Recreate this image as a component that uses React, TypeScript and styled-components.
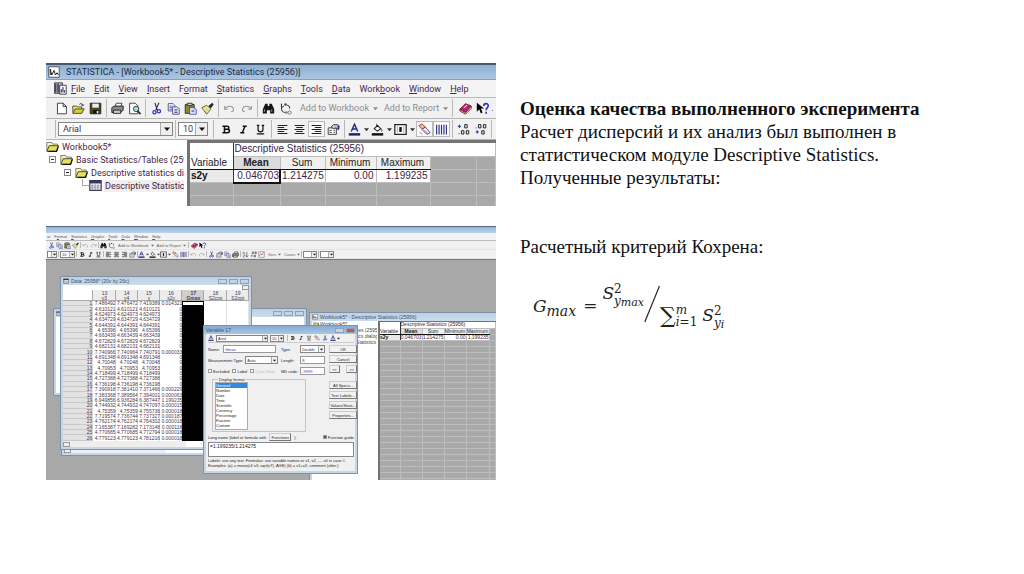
import React from "react";
import styled, { createGlobalStyle, css } from "styled-components";

const GlobalStyle = createGlobalStyle`
  *, *::before, *::after { box-sizing: border-box; }
  body { margin: 0; background: #fff; }
  button, select, input, textarea {
    margin: 0; padding: 0; border: 0; background: none; color: inherit; font: inherit; appearance: none; border-radius: 0; outline: none;
  }
  h1, p { margin: 0; }
  svg { flex: none; }
`;

/* ---------- slide ---------- */

const Slide = styled.main`
  display: grid;
  grid-template-columns: 450fr 504fr;
  column-gap: 24px;
  padding: 63px 0 0 46px;
`;

const Shots = styled.div`
  display: flex;
  flex-direction: column;
  gap: 20px;
  min-width: 0;
`;

const Notes = styled.section`
  padding-top: 34px;
  font: 19px/23px "Liberation Serif", serif;
  color: #111;
`;

const Heading = styled.h1`
  font-size: 19px;
  line-height: 23px;
  font-weight: 700;
  white-space: nowrap;
`;

const Body = styled.p`
  max-width: 400px;
  margin-bottom: 46px;
`;

/* ---------- formula ---------- */

const Formula = styled.div`
  display: flex;
  height: 46px;
  margin: 25px 0 0 13px;
  font: italic 17px/20px "DejaVu Serif", serif;
  color: #222;
`;

const Part = styled.div<{ $top?: number; $left?: number }>`
  display: flex;
  align-items: flex-start;
  padding-top: ${(p) => p.$top ?? 0}px;
  padding-left: ${(p) => p.$left ?? 0}px;
`;

const Sub = styled.span`
  font-size: 14px;
  line-height: 20px;
  padding-top: 5px;
`;

const Stack = styled.span`
  display: flex;
  flex-direction: column;
  font-size: 12px;
  line-height: 12px;
`;

const Upright = styled.span`
  font-style: normal;
`;

const Tiny = styled.span`
  padding-top: 2px;
  font-size: 11px;
  line-height: 12px;
`;

const Index = styled.span`
  display: flex;
  align-items: flex-start;
`;

const Slash = () => (
  <svg width="16" height="42" viewBox="0 0 16 42" aria-hidden="true">
    <path d="M15.5 3 L0.8 39" stroke="#222" strokeWidth="1.2" />
  </svg>
);

const Sigma = styled.span`
  font: normal 22px/24px "DejaVu Serif", serif;
`;

/* ---------- icons ---------- */

const art: Record<string, React.ReactNode> = {
  app: (
    <>
      <path d="M1 1h14v14H1z" fill="#fff" stroke="#333" />
      <path d="M3 12V4l2 8 3-6 2 6 2-3 2 3" fill="none" stroke="#222" strokeWidth="1.3" />
    </>
  ),
  book5: (
    <>
      <path d="M0.500 1h10v13h-10z" fill="#bbb" stroke="#333" />
      <path d="M2 2v11M5 2v11" stroke="#446" strokeWidth="2" />
      <path d="M7 4h8v11H7z" fill="#fff" stroke="#222" />
      <path d="M9 13V9M11 13V6M13 13v-3" stroke="#336" strokeWidth="1.4" />
    </>
  ),
  page: <path d="M3 1.5h7l4 4v9H3zM10 1.5v4h4" fill="#fff" stroke="#222" />,
  open: (
    <>
      <path d="M1 13V5h5l1 1h5v3" fill="#f3e95a" stroke="#333" />
      <path d="M1 14 4 8.500h11L12 14z" fill="#d8ce2c" stroke="#333" />
      <path d="M9 3c2-2 4-1 4 1m-1.500-1L13 5l1.500-2" fill="none" stroke="#222" />
    </>
  ),
  save: (
    <>
      <path d="M1.500 1.500h13v13h-13z" fill="#4a4a10" stroke="#111" />
      <path d="M4 2h8v5H4z" fill="#eee" />
      <path d="M5 10h7v4H5z" fill="#111" />
      <path d="M9.500 11h2v3h-2z" fill="#eee" />
    </>
  ),
  print: (
    <>
      <path d="M5 6 6.500 1.500h7L12 6z" fill="#fff" stroke="#222" />
      <path d="M1 7l3-2h11v5l-3 3H1z" fill="#8d8d8d" stroke="#111" />
      <path d="M3 10h9v4H3z" fill="#ccc" stroke="#111" />
      <path d="M9 12h2" stroke="#cc3" />
    </>
  ),
  preview: (
    <>
      <path d="M2 1.500h7l3 3v10H2z" fill="#fff" stroke="#222" />
      <circle cx="10" cy="8.500" r="3.300" fill="#a6dbe0" stroke="#222" />
      <path d="m12 11 3.500 4" stroke="#222" strokeWidth="2" />
    </>
  ),
  cut: (
    <>
      <path d="M6 1l3 9M11 1 7 10" stroke="#224" strokeWidth="1.300" />
      <circle cx="5.500" cy="12.500" r="2" fill="none" stroke="#2a35c0" strokeWidth="1.500" />
      <circle cx="11" cy="11.500" r="2" fill="none" stroke="#2a35c0" strokeWidth="1.500" />
    </>
  ),
  copy: (
    <>
      <path d="M1.500 2h6l2 2v7h-8z" fill="#fff" stroke="#333a8c" />
      <path d="M3 5h4M3 7h4M3 9h4" stroke="#444" />
      <path d="M7 6h5l3 2v7H7z" fill="#fff" stroke="#2a2f9c" />
      <path d="M9 9h4M9 11h4M9 13h4" stroke="#334" />
    </>
  ),
  paste: (
    <>
      <path d="M1.500 3h11v11h-11z" fill="#8a8a2c" stroke="#222" />
      <path d="M4 1.500h6v3H4z" fill="#ccc" stroke="#222" />
      <path d="M7 7h5l3 2v6H7z" fill="#fff" stroke="#2a2fb0" />
      <path d="M9 10h4M9 12h4" stroke="#2a2fb0" />
    </>
  ),
  brush: (
    <>
      <path d="m1 7 6-3 5 5-5 6z" fill="#f4ef8e" stroke="#443" />
      <path d="m3 9 4 4M5 7l4 4" stroke="#aa9" />
      <path d="m9 5 5-4 1.500 2L12 8z" fill="#223" />
    </>
  ),
  undo: <path d="M2 5v4h4M2 9c3-5 10-5 11 0 0 2-1 3-3 3" fill="none" stroke="#999" strokeWidth="1.300" />,
  redo: <path d="M14 5v4h-4m4 0C11 4 4 4 3 9c0 2 1 3 3 3" fill="none" stroke="#999" strokeWidth="1.300" />,
  find: (
    <>
      <path d="M4 2h3v3h2V2h3l3 7v5h-5v-4H6v4H1V9z" fill="#151515" />
      <path d="M3 9v3M12 9v3" stroke="#bbb" />
    </>
  ),
  replace: (
    <>
      <path d="M3 2v5l3-2M3 7c0 4 1 5 4 6m3-9c2 0 3 1 3 4" fill="none" stroke="#222" strokeWidth="1.200" />
      <circle cx="8" cy="3" r="1.500" fill="#444" />
      <circle cx="13" cy="13" r="2" fill="none" stroke="#666" />
      <circle cx="9" cy="13" r="1.500" fill="#777" />
    </>
  ),
  manual: (
    <>
      <path d="m1 9 7-7 7 3-7 8z" fill="#b0208c" stroke="#611" />
      <path d="m1 9 7 4 7-8v3l-7 7-7-4z" fill="#f1dca0" stroke="#702" />
      <path d="m6 7 4-3" stroke="#fbb" strokeWidth="1.500" />
    </>
  ),
  help: (
    <>
      <path d="M1 1v11l3-3 2 5 2-1-2-5h4z" fill="#000" />
      <path d="M9.500 5c0-4 6-4 5.500 0 0 2-2.500 2-2.500 5M12.500 12v2.500" fill="none" stroke="#2c34c4" strokeWidth="2" />
    </>
  ),
  bold: (
    <path d="M5.500 4v8M3 4h6c2.500 0 2.500 3.800 0 3.800H6M9 7.800c3.500 0 3.500 4.200 0 4.200H3" fill="none" stroke="#111" strokeWidth="1.900" />
  ),
  italic: <path d="M7 4h5M4 12h5M9.800 4 6.500 12" stroke="#111" strokeWidth="1.800" />,
  underline: <path d="M5 3v5c0 4 6 4 6 0V3M3.500 3h3M9.500 3h3M3.500 13.500h9" fill="none" stroke="#111" strokeWidth="1.500" />,
  left: <path d="M2 3h12M2 5.500h8M2 8h12M2 10.500h8M2 13h12" stroke="#222" strokeWidth="1.300" />,
  center: <path d="M2 3h12M4 5.500h8M2 8h12M4 10.500h8M2 13h12" stroke="#222" strokeWidth="1.300" />,
  right: <path d="M2 3h12M6 5.500h8M2 8h12M6 10.500h8M2 13h12" stroke="#222" strokeWidth="1.300" />,
  props: (
    <>
      <path d="M1.500 6h10v8h-10z" fill="#fff" stroke="#222" />
      <path d="M3 9h3M3 11.500h3M8 9h2M8 11.500h2" stroke="#222" />
      <path d="M5 5 8 2h5l2 2-1 4-3-2-3 1z" fill="#ccc" stroke="#222" />
      <path d="M14 3v5" stroke="#2a2fb0" strokeWidth="2" />
    </>
  ),
  ink: (
    <>
      <path d="M4 10.500 8 1.500 12 10.500M5 7.500h6" fill="none" stroke="#222c88" strokeWidth="1.800" />
      <path d="M1 14h14" stroke="#1a1f70" strokeWidth="3" />
    </>
  ),
  fill: (
    <>
      <path d="m4 7 4-4 4 4-4 3z" fill="#fff" stroke="#222" strokeWidth="1.400" />
      <path d="M12 7c2 2 2 2.500 1 3.500M7 1v3" fill="none" stroke="#222" />
      <path d="M1 14h14" stroke="#111" strokeWidth="3" />
    </>
  ),
  frame: (
    <>
      <path d="M1 2h14v12H1z" fill="#fff" stroke="#222" strokeWidth="1.500" />
      <path d="M4 4v8M12 4v8" stroke="#999" />
      <path d="M6.500 5h3v6h-3z" fill="#111" />
    </>
  ),
  pencil: (
    <>
      <path d="m1 3 4-2 4 4-4 3z" fill="#f4b08a" stroke="#844" />
      <path d="m5 8 4-3 6 7-4 2z" fill="#eee" stroke="#338" />
      <path d="m8 9 4 4M2 11l3 3" stroke="#c55" />
    </>
  ),
  cells: <path d="M2 2v12M5 2v12M8 2v12M11 2v12M14 2v12" stroke="#2e2e80" strokeWidth="1.400" />,
  more: (
    <>
      <path d="M1 4h4M3 2v4" stroke="#2a2fb0" strokeWidth="1.300" />
      <path d="M9.500 2h3v4h-3zM5.500 9.500h3v4h-3zM11.500 9.500h3v4h-3zM2 13h1" fill="none" stroke="#222" strokeWidth="1.200" />
    </>
  ),
  less: (
    <>
      <path d="M5.500 2h3v4h-3zM11.500 2h3v4h-3zM2 6h1M9.500 9.500h3v4h-3z" fill="none" stroke="#222" strokeWidth="1.200" />
      <path d="M2 11h4M4 9v4" stroke="#2a2fb0" strokeWidth="1.300" />
    </>
  ),
  folder: (
    <>
      <path d="M1 13V3h6l1 2h6v2" fill="#fbf6b0" stroke="#665" />
      <path d="M1 14 4 7h11.500L13 14z" fill="#e6e05a" stroke="#444" strokeWidth="1.200" />
      <path d="M15 8l-2 6H3" stroke="#111" fill="none" strokeWidth="1.500" />
    </>
  ),
  sheet: (
    <>
      <path d="M1 2h14v12H1z" fill="#fff" stroke="#335" strokeWidth="1.400" />
      <path d="M1 4h14" stroke="#336" strokeWidth="3" />
      <path d="M4 6v8M7.500 6v8M11 6v8M1 8.500h14M1 11h14" stroke="#889" />
    </>
  ),
  sort: (
    <>
      <path d="M2 7 4 2l2 5M2 9h4l-4 5h4" fill="none" stroke="#b03030" strokeWidth="1.300" />
      <path d="M11 2v11m-3-3 3 4 3-4" fill="none" stroke="#223a9c" strokeWidth="1.400" />
    </>
  ),
  chart: (
    <>
      <path d="M1.500 1.500h13v13h-13z" fill="#f4f4f4" stroke="#555" />
      <path d="m3 11 3-5 3 3 4-6" fill="none" stroke="#a33" strokeWidth="1.300" />
    </>
  ),
};

const Icon = ({ name, size = 13 }: { name: string; size?: number }) => (
  <svg width={size} height={size} viewBox="0 0 16 16" aria-hidden="true">
    {art[name]}
  </svg>
);

const Caret = ({ size = 5 }: { size?: number }) => (
  <svg width={size} height={size} viewBox="0 0 6 6" aria-hidden="true">
    <path d="M0 1.500h6L3 5z" fill="currentColor" />
  </svg>
);

/* ---------- shared application parts ---------- */

const WorkbookApp = styled.section`
  display: flex;
  flex-direction: column;
  height: 143px;
  overflow: hidden;
  background: #f0f0f0;
  color: #333;
  font: 9px/12px Roboto, sans-serif;
`;

const TitleBar = styled.header`
  display: flex;
  align-items: center;
  gap: 6px;
  height: 17px;
  flex: none;
  padding-left: 2px;
  border-top: 2px solid #45586c;
  border-bottom: 1px solid #8aa0b8;
  background: linear-gradient(#90b0d2, #a9c5e2);
  color: #1c2c44;
  white-space: nowrap;
`;

const MenuBar = styled.nav<{ $small?: boolean }>`
  display: flex;
  align-items: center;
  flex: none;
  white-space: nowrap;
  background: #f3f3f3;
  border-bottom: 1px solid #bbb;
  ${(p) =>
    p.$small
      ? css`
          height: 8px;
          gap: 4px;
          color: #555;
          padding-left: 1px;
        `
      : css`
          height: 18px;
          gap: 9px;
          padding-left: 8px;
          color: #4a2346;
        `}
`;

const MenuIcon = styled.span`
  display: flex;
  margin-right: -5px;
`;

const MenuItem = styled.button`
  white-space: nowrap;
`;

const Key = styled.u`
  text-underline-offset: 1px;
`;

const ToolBar = styled.div<{ $small?: boolean }>`
  display: flex;
  align-items: center;
  flex: none;
  height: ${(p) => (p.$small ? 9 : 21)}px;
  padding-left: ${(p) => (p.$small ? 1 : 7)}px;
  border-bottom: 1px solid ${(p) => (p.$small ? "#e4e4e4" : "#b4b4b4")};
  background: #f1f1f1;
  white-space: nowrap;
  overflow: hidden;
`;

const Tool = styled.button<{ $w: number; $down?: boolean }>`
  display: flex;
  flex: none;
  align-items: center;
  justify-content: center;
  gap: ${(p) => (p.$w > 11 ? 3 : 1)}px;
  align-self: stretch;
  width: ${(p) => p.$w}px;
  ${(p) =>
    p.$down &&
    css`
      margin: 2px 0;
      border: 1px solid #b9b9b9;
      background: #fafafa;
    `}
`;

const TextTool = styled.button<{ $small?: boolean }>`
  display: flex;
  flex: none;
  align-items: center;
  gap: ${(p) => (p.$small ? 2 : 4)}px;
  margin-left: ${(p) => (p.$small ? 3 : 6)}px;
  color: ${(p) => (p.$small ? "#666" : "#8c8c8c")};
`;

const Rule = styled.span<{ $w?: number }>`
  flex: none;
  align-self: stretch;
  width: ${(p) => p.$w ?? 5}px;
  margin: 1px 0;
  background: linear-gradient(#b8b8b8, #b8b8b8) center / 1px 100% no-repeat;
`;

const Combo = styled.span<{ $w: number; $h: number }>`
  display: flex;
  flex: none;
  align-items: stretch;
  width: ${(p) => p.$w}px;
  height: ${(p) => p.$h}px;
  border: 1px solid #858585;
  background: #fff;
  color: #3d3348;
  & > select { flex: 1; min-width: 0; padding-left: ${(p) => (p.$h > 10 ? 4 : 1)}px; }
`;

const ComboCap = styled.span`
  display: flex;
  align-items: center;
  justify-content: center;
  aspect-ratio: 1;
  border-left: 1px solid #aaa;
  background: #eee;
  color: #111;
  pointer-events: none;
`;

const Select = ({ label, value, w, h = 14 }: { label: string; value: string; w: number; h?: number }) => (
  <Combo $w={w} $h={h}>
    <select aria-label={label}>
      <option>{value}</option>
    </select>
    <ComboCap>
      <Caret size={h > 10 ? 6 : 3} />
    </ComboCap>
  </Combo>
);

/* entries: icon name, "|" separator, "name+" with caret, "name!" pressed */
const Tools = ({ items, w = 17, size = 13 }: { items: string[]; w?: number; size?: number }) => (
  <>
    {items.map((item, i) => {
      if (item === "|") return <Rule key={i} $w={w > 10 ? 5 : 2} />;
      const name = item.replace(/[+!]/, "");
      const drop = item.endsWith("+");
      return (
        <Tool key={i} $w={drop ? w + (w > 10 ? 6 : 3) : w} $down={item.endsWith("!")} aria-label={name}>
          <Icon name={name} size={size} />
          {drop && <Caret size={w > 10 ? 5 : 3} />}
        </Tool>
      );
    })}
  </>
);

const menuOf = (items: [string, string, string][]) =>
  items.map(([a, k, b]) => (
    <MenuItem key={a + k + b}>
      {a}
      <Key>{k}</Key>
      {b}
    </MenuItem>
  ));

/* ---------- upper screenshot ---------- */

const Workspace = styled.div`
  display: flex;
  flex: 1;
  min-height: 0;
  background: #fff;
`;

const Tree = styled.ul`
  flex: none;
  width: 138px;
  margin: 0;
  padding: 0;
  list-style: none;
  overflow: hidden;
  color: #4a2346;
`;

const TreeRow = styled.li<{ $indent: number }>`
  display: flex;
  align-items: center;
  gap: 2px;
  height: 13px;
  padding-left: ${(p) => p.$indent}px;
  white-space: nowrap;
`;

const TreeText = styled.span<{ $on?: boolean }>`
  padding: 0 2px 0 1px;
  background: ${(p) => (p.$on ? "#efefef" : "none")};
`;

const Toggle = styled.button`
  flex: none;
  width: 7px;
  height: 7px;
  margin-right: 2px;
  border: 1px solid #888;
  background: linear-gradient(#222, #222) center / 3px 1px no-repeat #fff;
`;

const Branch = styled.span`
  flex: none;
  align-self: flex-start;
  width: 7px;
  height: 7px;
  margin-right: -2px;
  border-left: 1px solid #aaa;
  border-bottom: 1px solid #aaa;
`;

const SheetPane = styled.div<{ $small?: boolean }>`
  flex: 1;
  min-width: 0;
  margin-left: ${(p) => (p.$small ? 1 : 3)}px;
  border: solid #747474;
  border-width: ${(p) => (p.$small ? "1px 0 0 2px" : "3px 0 0 3px")};
  overflow: hidden;
  background: #a9a9a9;
`;

const Results = styled.table<{ $small?: boolean }>`
  width: 100%;
  table-layout: fixed;
  border-collapse: collapse;
  color: #3a2346;
  font: ${(p) => (p.$small ? "5px/5px" : "10px/12px")} "Liberation Sans", sans-serif;
  white-space: nowrap;
  td, th {
    height: ${(p) => (p.$small ? 6 : 13)}px;
    padding: ${(p) => (p.$small ? "0" : "0 2px 0 1px")};
    border-right: 1px solid #bdbdbd;
    border-bottom: 1px solid #bdbdbd;
    font-weight: 400;
    overflow: hidden;
  }
`;

const TitleCell = styled.th`
  background: #fff;
  text-align: left;
`;

const HeadCell = styled.th<{ $strong?: boolean }>`
  background: ${(p) => (p.$strong ? "#dcdcdc" : "#f0f0f0")};
  color: #222;
  && { border-bottom-color: #111; font-weight: ${(p) => (p.$strong ? 700 : 400)}; }
`;

const CornerCell = styled.th`
  background: #fff;
  color: #222;
  text-align: left;
  vertical-align: bottom;
  && { border-right-color: #333; border-bottom-color: #111; }
`;

const RowHead = styled.th`
  background: #e9e9e9;
  color: #111;
  text-align: left;
  && { font-weight: 700; border-right-color: #333; }
`;

const NumCell = styled.td<{ $active?: boolean }>`
  background: #fff;
  text-align: right;
  ${(p) =>
    p.$active &&
    css`
      && { border: 1px solid #111; border-right-width: 2px; border-bottom-width: 2px; padding-right: 0; }
    `}
`;

const ResultTable = ({ small }: { small?: boolean }) => {
  const widths = small ? [20, 22, 22, 22, 23] : [43, 47, 45, 51, 54];
  return (
    <Results $small={small}>
      <colgroup>
        {widths.map((w, i) => (
          <col key={i} width={w} />
        ))}
        {small ? <col /> : <col width={46} />}
        {!small && <col />}
      </colgroup>
      <thead>
        <tr>
          <CornerCell rowSpan={2}>Variable</CornerCell>
          <TitleCell colSpan={small ? 5 : 6}>Descriptive Statistics (25956)</TitleCell>
        </tr>
        <tr>
          <HeadCell $strong>Mean</HeadCell>
          <HeadCell>Sum</HeadCell>
          <HeadCell>Minimum</HeadCell>
          <HeadCell>Maximum</HeadCell>
          <td />
          {!small && <td />}
        </tr>
      </thead>
      <tbody>
        <tr>
          <RowHead>s2y</RowHead>
          <NumCell $active={!small}>0.046703</NumCell>
          <NumCell>1.214275</NumCell>
          <NumCell>0.00</NumCell>
          <NumCell>1.199235</NumCell>
          <td />
          {!small && <td />}
        </tr>
        {Array.from({ length: small ? 24 : 2 }, (_, r) => (
          <tr key={r}>
            {Array.from({ length: small ? 6 : 7 }, (_, c) => (
              <td key={c} />
            ))}
          </tr>
        ))}
      </tbody>
    </Results>
  );
};

const WorkbookShot = () => (
  <WorkbookApp>
    <TitleBar>
      <Icon name="app" size={12} />
      STATISTICA - [Workbook5* - Descriptive Statistics (25956)]
    </TitleBar>
    <MenuBar>
      <MenuIcon>
        <Icon name="book5" size={13} />
      </MenuIcon>
      {menuOf([
        ["", "F", "ile"],
        ["", "E", "dit"],
        ["", "V", "iew"],
        ["", "I", "nsert"],
        ["F", "o", "rmat"],
        ["", "S", "tatistics"],
        ["", "G", "raphs"],
        ["", "T", "ools"],
        ["", "D", "ata"],
        ["Work", "b", "ook"],
        ["", "W", "indow"],
        ["", "H", "elp"],
      ])}
    </MenuBar>
    <ToolBar>
      <Tools
        items={["page", "open", "save", "|", "print", "preview", "|", "cut", "copy", "paste", "brush", "|", "undo", "redo", "|", "find", "replace"]}
      />
      <TextTool>
        Add to Workbook <Caret />
      </TextTool>
      <TextTool>
        Add to Report <Caret />
      </TextTool>
      <Rule $w={9} />
      <Tools items={["manual", "help"]} />
      <span>.</span>
    </ToolBar>
    <ToolBar>
      <Rule />
      <Select label="Font" value="Arial" w={115} />
      <Rule />
      <Select label="Font size" value="10" w={30} />
      <Rule $w={10} />
      <Tools
        items={["bold", "italic", "underline", "|", "left", "center", "right!", "props", "|", "ink+", "fill+", "frame+", "pencil!", "cells!", "|", "more", "less", "|"]}
      />
    </ToolBar>
    <Workspace>
      <Tree>
        <TreeRow $indent={0}>
          <Icon name="folder" />
          <TreeText>Workbook5*</TreeText>
        </TreeRow>
        <TreeRow $indent={3}>
          <Toggle aria-label="Collapse" />
          <Icon name="folder" />
          <TreeText>Basic Statistics/Tables (25956)</TreeText>
        </TreeRow>
        <TreeRow $indent={18}>
          <Toggle aria-label="Collapse" />
          <Icon name="folder" />
          <TreeText>Descriptive statistics dialog</TreeText>
        </TreeRow>
        <TreeRow $indent={36}>
          <Branch />
          <Icon name="sheet" />
          <TreeText $on>Descriptive Statistics (25956)</TreeText>
        </TreeRow>
      </Tree>
      <SheetPane>
        <ResultTable />
      </SheetPane>
    </Workspace>
  </WorkbookApp>
);

/* ---------- lower screenshot ---------- */

const DesktopApp = styled.section`
  display: flex;
  flex-direction: column;
  height: 254px;
  overflow: hidden;
  background: #f0f0f0;
  color: #444;
  font: 4px/5px "Liberation Sans", sans-serif;
`;

const SlimTitle = styled.div`
  flex: none;
  height: 7px;
  border-top: 1px solid #56687c;
  background: linear-gradient(#93b4d6, #bcd3ea);
`;

const Desktop = styled.div`
  position: relative;
  flex: 1;
  border-top: 1px solid #777;
  background: #a8a8a8;
  overflow: hidden;
`;

const Frame = styled.div<{ $x: number; $y: number; $w: number; $h: number }>`
  position: absolute;
  left: ${(p) => p.$x}px;
  top: ${(p) => p.$y}px;
  width: ${(p) => p.$w}px;
  height: ${(p) => p.$h}px;
  display: flex;
  flex-direction: column;
  padding: 0 2px 2px;
  border: 1px solid #7f91a5;
  background: #c5d6e8;
`;

const FrameTitle = styled.div<{ $active?: boolean }>`
  display: flex;
  align-items: center;
  gap: 2px;
  flex: none;
  height: 8px;
  margin: 0 -2px;
  padding: 0 2px;
  background: ${(p) => (p.$active ? "linear-gradient(#86abd2, #a9c6e4)" : "linear-gradient(#bdd0e4, #ccdcec)")};
  color: #3d5068;
  font-size: 5px;
  white-space: nowrap;
`;

const Spacer = styled.span`
  flex: 1;
`;

const WinButton = styled.button<{ $close?: boolean }>`
  width: 9px;
  height: 5px;
  border: 1px solid #8fa2b8;
  background: ${(p) => (p.$close ? "#c8574a" : "#c3d4e6")};
`;

const WinButtons = ({ close }: { close?: boolean }) => (
  <>
    {!close && <WinButton aria-label="Minimize" />}
    <WinButton aria-label="Maximize" />
    <WinButton aria-label="Close" $close={close} />
  </>
);

const DataInfo = styled.div`
  display: flex;
  justify-content: flex-end;
  flex: none;
  height: 5px;
  background: #fff;
`;

const DataTable = styled.table`
  width: 100%;
  flex: none;
  height: 151px;
  table-layout: fixed;
  border-collapse: separate;
  border-spacing: 0;
  background: #fff;
  font: 5px/5px "Liberation Sans", sans-serif;
  color: #4a3a50;
  th, td { padding: 0; font-weight: 400; text-align: right; overflow: hidden; white-space: nowrap; box-shadow: inset -1px 0 #e2e2e2; }
  thead th { height: 11px; text-align: center; background: #ececec; box-shadow: inset -1px -1px #aaa; }
  thead th:first-child { background: #fff; }
  tbody th { padding-right: 1px; background: #e2e2e2; box-shadow: inset 0 -1px #c8c8c8; }
`;

const BlackCell = styled.td<{ $first?: boolean }>`
  && {
    background: ${(p) => (p.$first ? "#fff" : "#000")};
    box-shadow: inset 0 0 0 1px #000;
  }
`;

const StrongHead = styled.th`
  && { background: #cfcfcf; font-weight: 700; }
`;

const ScrollBar = styled.div`
  display: flex;
  align-items: center;
  flex: 1;
  max-height: 6px;
  background: linear-gradient(90deg, #eee 66%, #fff 66%);
`;

const ScrollCap = styled.button`
  width: 7px;
  height: 5px;
  border: 1px solid #999;
  background: #eee;
`;

const rows: string[][] = [
  ["7.486492", "7.476472", "7.419389", "0.014321"],
  ["4.610121", "4.610121", "4.610121", "0"],
  ["4.624973", "4.624973", "4.624973", "0"],
  ["4.634729", "4.634729", "4.634729", "0"],
  ["4.644391", "4.644391", "4.644391", "0"],
  ["4.65396", "4.65396", "4.65396", "0"],
  ["4.663439", "4.663439", "4.663439", "0"],
  ["4.672829", "4.672829", "4.672829", "0"],
  ["4.682131", "4.682131", "4.682131", "0"],
  ["7.740966", "7.740964", "7.740791", "0.000033"],
  ["4.691348", "4.691348", "4.691348", "0"],
  ["4.70048", "4.70048", "4.70048", "0"],
  ["4.70953", "4.70953", "4.70953", "0"],
  ["4.718499", "4.718499", "4.718499", "0"],
  ["4.727388", "4.727388", "4.727388", "0"],
  ["4.736198", "4.736198", "4.736198", "0"],
  ["7.390918", "7.381410", "7.371466", "0.000229"],
  ["7.383368", "7.389564", "7.394001", "0.000063"],
  ["6.949856", "6.936284", "6.387447", "1.199235"],
  ["4.744932", "4.744932", "4.747097", "0.000015"],
  ["4.75359", "4.75359", "4.755736", "0.000018"],
  ["7.719574", "7.736744", "7.737327", "0.000187"],
  ["4.762174", "4.762174", "4.764302", "0.000018"],
  ["7.165387", "7.169282", "7.173148", "0.000118"],
  ["4.770685", "4.770685", "4.772794", "0.000018"],
  ["4.779123", "4.779123", "4.781216", "0.000018"],
];

const heads: [string, string][] = [
  ["13", "y3"],
  ["14", "y4"],
  ["15", "y"],
  ["16", "s2y"],
  ["17", "Gmax"],
  ["18", "S2cos"],
  ["19", "S2opt"],
];

const DataSheet = () => (
  <DataTable>
    <colgroup>
      <col width={30} />
      {heads.map(([n]) => (
        <col key={n} width={22} />
      ))}
    </colgroup>
    <thead>
      <tr>
        <th />
        {heads.map(([n, t]) => {
          const Cell = n === "17" ? StrongHead : "th";
          return (
            <Cell key={n}>
              {n}
              <br />
              {t}
            </Cell>
          );
        })}
      </tr>
    </thead>
    <tbody>
      {rows.map((r, i) => (
        <tr key={i}>
          <th>{i + 1}</th>
          {r.map((v, c) => (
            <td key={c}>{v}</td>
          ))}
          <BlackCell $first={i === 0} />
          <td />
          <td />
        </tr>
      ))}
    </tbody>
  </DataTable>
);

const DialogBody = styled.form`
  display: flex;
  flex-direction: column;
  flex: 1;
  min-height: 0;
  padding: 0 1px 0 2px;
  background: #f0f0f0;
  color: #222;
  white-space: nowrap;
`;

const FontRow = styled.div`
  display: flex;
  align-items: center;
  gap: 2px;
  flex: none;
  height: 9px;
  border-bottom: 1px solid #ccc;
`;

const DialogGrid = styled.div`
  display: grid;
  grid-template-columns: 1fr 28px;
  column-gap: 4px;
  flex: none;
  padding-top: 2px;
`;

const FieldGrid = styled.div`
  display: grid;
  grid-template-columns: 68px 1fr;
  column-gap: 5px;
  row-gap: 3px;
  grid-auto-rows: 8px;
`;

const Field = styled.label`
  display: flex;
  align-items: center;
  justify-content: space-between;
  gap: 2px;
`;

const TextBox = styled.input<{ $w: number }>`
  width: ${(p) => p.$w}px;
  height: 8px;
  padding: 0 1px;
  border: 1px solid #999;
  background: #fff;
  color: #33c;
`;

const Checks = styled.div`
  display: flex;
  align-items: center;
  gap: 3px;
`;

const Check = styled.label<{ $off?: boolean }>`
  display: flex;
  align-items: center;
  gap: 1px;
  color: ${(p) => (p.$off ? "#bbb" : "inherit")};
  & > input { width: 4px; height: 4px; border: 1px solid #999; background: #fff; }
  & > input:checked { background: #555; }
`;

const Group = styled.fieldset`
  width: 94px;
  height: 55px;
  margin: 2px 0 0 4px;
  padding: 0 0 0 2px;
  border: 1px solid #c4c4c4;
  & > legend { padding: 0 1px; margin-left: 3px; }
`;

const FormatList = styled.ul`
  width: 33px;
  height: 48px;
  margin: 0;
  padding: 0;
  list-style: none;
  border: 1px solid #aaa;
  background: #fff;
`;

const FormatItem = styled.li<{ $on?: boolean }>`
  height: 5px;
  line-height: 5px;
  background: ${(p) => (p.$on ? "#2f8be0" : "none")};
  color: ${(p) => (p.$on ? "#fff" : "#222")};
`;

const ButtonColumn = styled.div`
  display: flex;
  flex-direction: column;
  gap: 2px;
`;

const PushButton = styled.button<{ $w?: number }>`
  width: ${(p) => p.$w ?? 28}px;
  height: 8px;
  border: 1px solid #9a9a9a;
  border-color: #ccc #777 #777 #ccc;
  background: #f2f2f2;
`;

const ButtonPair = styled.div`
  display: flex;
  justify-content: space-between;
  margin-bottom: 6px;
`;

const LongName = styled.div`
  display: flex;
  align-items: center;
  gap: 3px;
  flex: none;
  height: 8px;
  margin-top: 1px;
`;

const FormulaBox = styled.textarea`
  flex: none;
  height: 15px;
  margin: 1px 0;
  padding: 1px;
  border: 1px solid #888;
  background: #fff;
  resize: none;
  font-size: 5px;
`;

const formats = ["General", "Number", "Date", "Time", "Scientific", "Currency", "Percentage", "Fraction", "Custom"];

const VariableDialog = () => (
  <Frame $x={157} $y={65} $w={155} $h={149}>
    <FrameTitle $active>
      Variable 17
      <Spacer />
      <WinButtons close />
    </FrameTitle>
    <DialogBody>
      <FontRow>
        <Icon name="ink" size={6} />
        <Select label="Dialog font" value="Arial" w={52} h={7} />
        <Select label="Dialog font size" value="10" w={14} h={7} />
        <Tools items={["|", "bold", "italic", "underline", "pencil", "cut", "ink+"]} w={6} size={6} />
      </FontRow>
      <DialogGrid>
        <div>
          <FieldGrid>
            <Field>
              Name:
              <TextBox $w={53} defaultValue="Gmax" />
            </Field>
            <Field>
              Type:
              <Select label="Type" value="Double" w={25} h={8} />
            </Field>
            <Field>
              Measurement Type:
              <Select label="Measurement Type" value="Auto" w={33} h={8} />
            </Field>
            <Field>
              Length:
              <TextBox $w={25} defaultValue="8" disabled />
            </Field>
            <Checks>
              <Check>
                <input type="checkbox" /> Excluded
              </Check>
              <Check>
                <input type="checkbox" /> Label
              </Check>
              <Check $off>
                <input type="checkbox" disabled /> Case State
              </Check>
            </Checks>
            <Field>
              MD code:
              <TextBox $w={25} defaultValue="-9999" />
            </Field>
          </FieldGrid>
          <Group>
            <legend>Display format</legend>
            <FormatList>
              {formats.map((f, i) => (
                <FormatItem key={f} $on={i === 0}>
                  {f}
                </FormatItem>
              ))}
            </FormatList>
          </Group>
        </div>
        <ButtonColumn>
          <PushButton type="button">OK</PushButton>
          <PushButton type="button">Cancel</PushButton>
          <ButtonPair>
            <PushButton type="button" $w={11}>{"<<"}</PushButton>
            <PushButton type="button" $w={11}>{">>"}</PushButton>
          </ButtonPair>
          <PushButton type="button">All Specs...</PushButton>
          <PushButton type="button">Text Labels...</PushButton>
          <PushButton type="button">Values/Stats...</PushButton>
          <PushButton type="button">Properties...</PushButton>
        </ButtonColumn>
      </DialogGrid>
      <LongName>
        Long name (label or formula with
        <PushButton type="button" $w={22}>Functions</PushButton>
        ):
        <Spacer />
        <Check>
          <input type="checkbox" defaultChecked /> Function guide
        </Check>
      </LongName>
      <FormulaBox aria-label="Long name" defaultValue="=1.199235/1.214275" />
      <div>Labels: use any text. Formulas: use variable names or v1, v2, ..., v0 is case #.</div>
      <div>Examples: (a) = mean(v1:v3, sqrt(v7), AGE) (b) = v1+v2; comment (after;)</div>
    </DialogBody>
  </Frame>
);

const SmallTree = styled.div`
  flex: none;
  width: 65px;
  overflow: hidden;
  background: #fff;
  font-size: 5px;
  line-height: 6px;
  white-space: nowrap;
`;

const SmallTreeRow = styled.div<{ $indent: number }>`
  display: flex;
  gap: 1px;
  height: 6px;
  padding-left: ${(p) => p.$indent}px;
`;

const White = styled.div`
  flex: 1;
  display: flex;
  min-height: 0;
  background: #fff;
`;

const DesktopShot = () => (
  <DesktopApp>
    <SlimTitle />
    <MenuBar $small>
      {menuOf([
        ["", "", "at"],
        ["F", "o", "rmat"],
        ["", "S", "tatistics"],
        ["", "G", "raphs"],
        ["", "T", "ools"],
        ["", "D", "ata"],
        ["", "W", "indow"],
        ["", "H", "elp"],
      ])}
    </MenuBar>
    <ToolBar $small>
      <Tools items={["cut", "copy", "paste", "brush", "|", "undo", "redo", "|", "find", "replace"]} w={8} size={7} />
      <TextTool $small>
        Add to Workbook <Caret size={3} />
      </TextTool>
      <TextTool $small>
        Add to Report <Caret size={3} />
      </TextTool>
      <Rule $w={4} />
      <Tools items={["manual", "help"]} w={8} size={7} />.
    </ToolBar>
    <ToolBar $small>
      <Select label="Font" value="" w={10} h={7} />
      <Rule $w={3} />
      <Select label="Font size" value="10" w={15} h={7} />
      <Rule $w={3} />
      <Tools
        items={["bold", "italic", "underline", "|", "left", "center", "right", "props", "|", "ink+", "fill+", "frame+", "pencil", "cells", "|", "undo", "redo", "|", "cut", "props", "copy", "print", "|", "sort", "less", "chart"]}
        w={8}
        size={7}
      />
      <TextTool $small>
        Vars <Caret size={3} />
      </TextTool>
      <TextTool $small>
        Cases <Caret size={3} />
      </TextTool>
      <Rule $w={3} />
      <Select label="Case filter" value="" w={14} h={7} />
      <Rule $w={3} />
      <Select label="Variable filter" value="" w={14} h={7} />
    </ToolBar>
    <Desktop>
      <Frame $x={7} $y={48} $w={254} $h={88}>
        <FrameTitle>
          <Icon name="sheet" size={5} />
          <Spacer />
          <WinButtons />
        </FrameTitle>
        <White />
      </Frame>
      <Frame $x={15} $y={140} $w={160} $h={56}>
        <Spacer />
        <ScrollBar>
          <ScrollCap aria-label="Scroll left" />
        </ScrollBar>
      </Frame>
      <Frame $x={263} $y={52} $w={190} $h={180}>
        <FrameTitle>
          <Icon name="app" size={6} />
          Workbook5* - Descriptive Statistics (25956)
        </FrameTitle>
        <White>
          <SmallTree>
            <SmallTreeRow $indent={1}>
              <Icon name="folder" size={6} /> Workbook5*
            </SmallTreeRow>
            <SmallTreeRow $indent={2}>Basic Statistics/Tables (25956)</SmallTreeRow>
            <SmallTreeRow $indent={6}>Descriptive statistics dialog</SmallTreeRow>
            <SmallTreeRow $indent={18}>Descriptive Statistics</SmallTreeRow>
          </SmallTree>
          <SheetPane $small>
            <ResultTable small />
          </SheetPane>
        </White>
      </Frame>
      <Frame $x={14} $y={16} $w={192} $h={174}>
        <FrameTitle>
          <Icon name="sheet" size={6} />
          Data: 25956* (20v by 26c)
          <Spacer />
          <WinButtons />
        </FrameTitle>
        <DataInfo>
          <ScrollCap aria-label="Scroll up" />
        </DataInfo>
        <DataSheet />
        <ScrollBar>
          <ScrollCap aria-label="Scroll left" />
        </ScrollBar>
      </Frame>
      <VariableDialog />
    </Desktop>
  </DesktopApp>
);

/* ---------- page ---------- */

export default function App() {
  return (
    <>
      <GlobalStyle />
      <Slide>
        <Shots>
          <WorkbookShot />
          <DesktopShot />
        </Shots>
        <Notes>
          <Heading>Оценка качества выполненного эксперимента</Heading>
          <Body>
            Расчет дисперсий и их анализ был выполнен в статистическом модуле Descriptive Statistics. Полученные
            результаты:
          </Body>
          <p>Расчетный критерий Кохрена:</p>
          <Formula>
            <Part $top={13}>
              G<Sub>max</Sub>
            </Part>
            <Part $top={12} $left={7}>
              <Upright>=</Upright>
            </Part>
            <Part $left={5}>
              S
              <Stack>
                <Upright>2</Upright>
                <Index>
                  y<Tiny>max</Tiny>
                </Index>
              </Stack>
            </Part>
            <Slash />
            <Part $top={21}>
              <Sigma>∑</Sigma>
              <Stack>
                <span>m</span>
                <span>
                  i<Upright>=1</Upright>
                </span>
              </Stack>
            </Part>
            <Part $top={22} $left={5}>
              S
              <Stack>
                <Upright>2</Upright>
                <Index>
                  y<Tiny>i</Tiny>
                </Index>
              </Stack>
            </Part>
          </Formula>
        </Notes>
      </Slide>
    </>
  );
}
